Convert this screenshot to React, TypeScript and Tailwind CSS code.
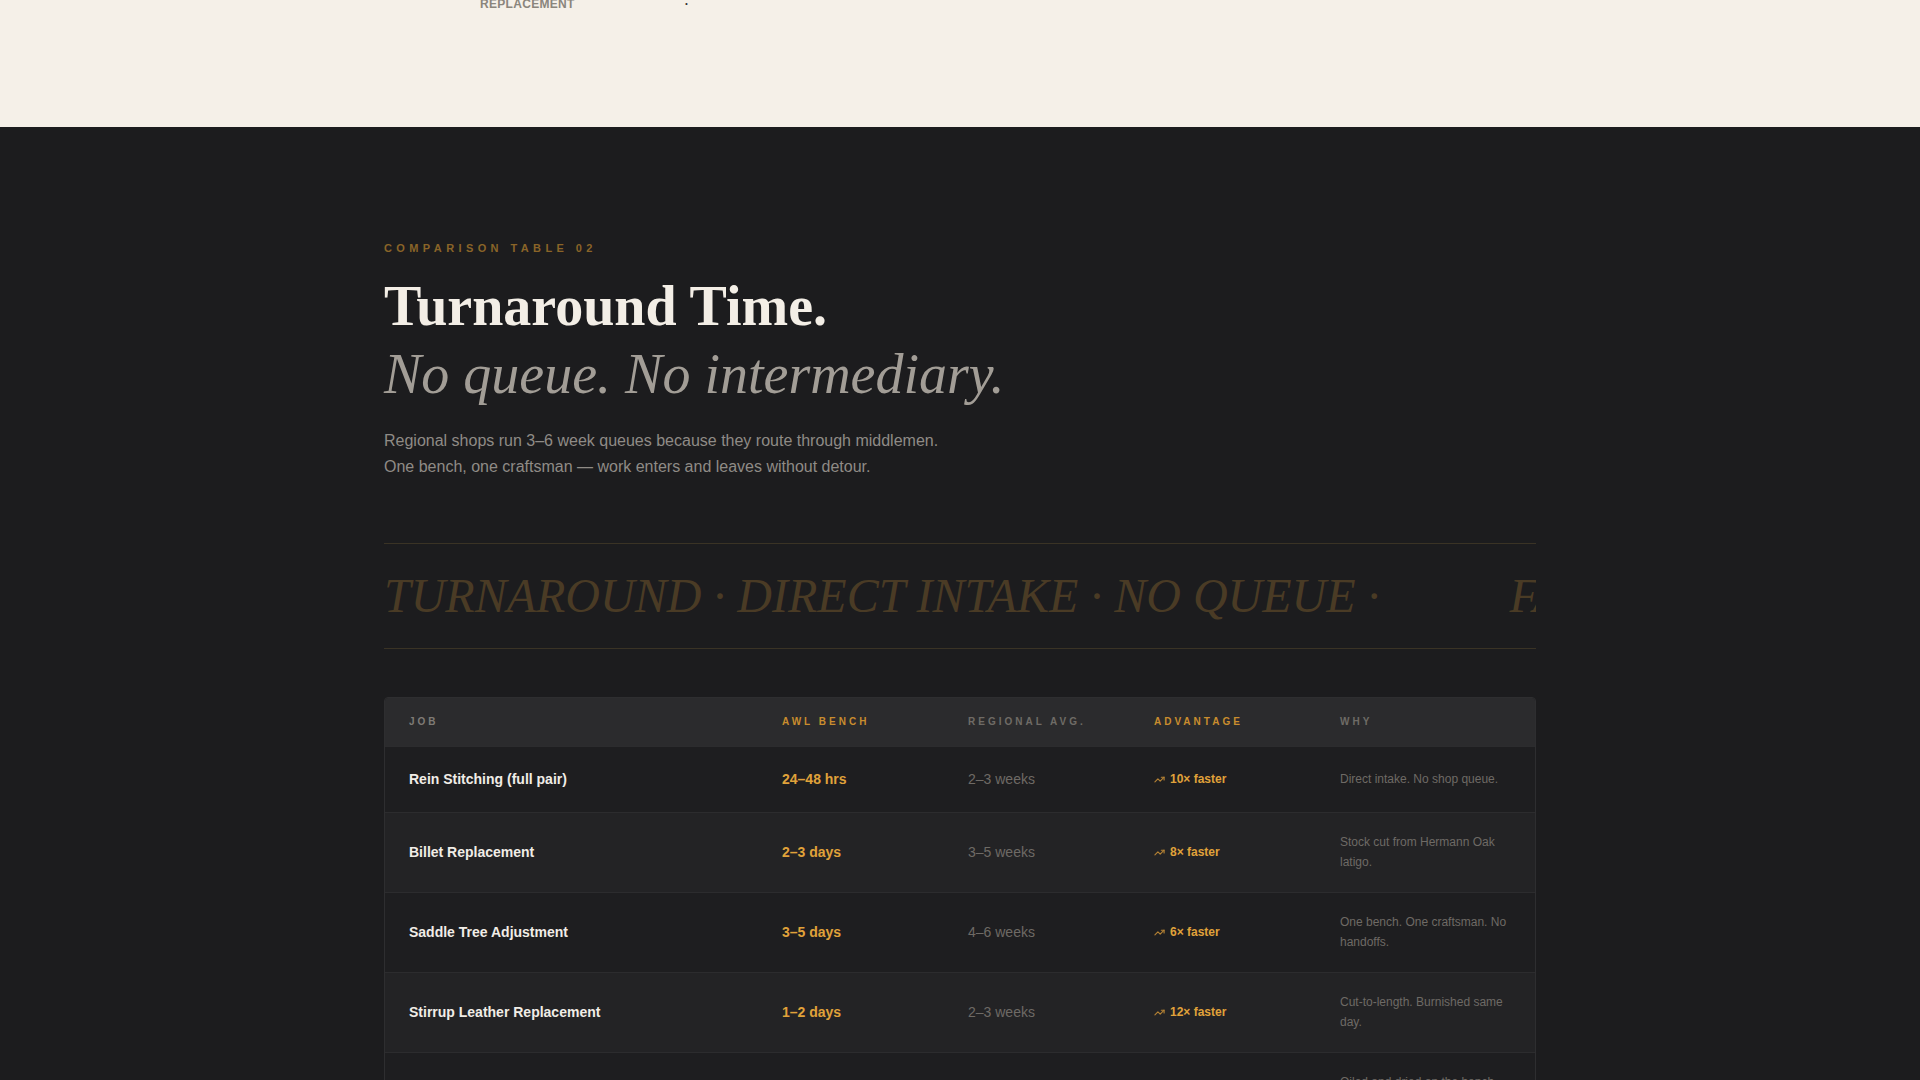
const rows = [
  { job: "Rein Stitching (full pair)", awl: "24–48 hrs", reg: "2–3 weeks", adv: "10× faster", why: "Direct intake. No shop queue." },
  { job: "Billet Replacement", awl: "2–3 days", reg: "3–5 weeks", adv: "8× faster", why: "Stock cut from Hermann Oak latigo." },
  { job: "Saddle Tree Adjustment", awl: "3–5 days", reg: "4–6 weeks", adv: "6× faster", why: "One bench. One craftsman. No handoffs." },
  { job: "Stirrup Leather Replacement", awl: "1–2 days", reg: "2–3 weeks", adv: "12× faster", why: "Cut-to-length. Burnished same day." },
  { job: "Full Saddle Conditioning", awl: "1 day", reg: "1–2 weeks", adv: "7× faster", why: "Oiled and dried on the bench, not in a back room." },
];

function Trend() {
  return (
    <svg width="11" height="11" viewBox="0 0 24 24" fill="none" stroke="currentColor" strokeWidth="2.5" strokeLinecap="round" strokeLinejoin="round">
      <polyline points="22 7 13.5 15.5 8.5 10.5 2 17" />
      <polyline points="16 7 22 7 22 13" />
    </svg>
  );
}

export default function App() {
  const sans = { fontFamily: '"Liberation Sans", Arial, sans-serif' };
  const serif = { fontFamily: '"Liberation Serif", "Times New Roman", serif' };
  return (
    <div className="min-h-screen bg-[#1c1c1e]" style={sans}>
      <div className="h-[127px] bg-[#f5f0e8] overflow-hidden">
        <div className="ml-[480px] -mt-[5px] flex gap-[110px] text-[12px] font-bold tracking-wide text-[#8a857c]">
          <span>REPLACEMENT</span>
          <span className="text-[#333]">·</span>
        </div>
      </div>

      <div className="mx-auto w-[1152px] pt-[113px]">
        <div className="text-[11px] font-bold tracking-[0.4em] text-[#8a6428]">COMPARISON TABLE 02</div>
        <h2 className="mt-[15px] text-[56px] font-bold leading-[68px] text-[#f3eee6]" style={serif}>Turnaround Time.</h2>
        <div className="text-[56px] italic leading-[68px] text-[#a29d96]" style={serif}>No queue. No intermediary.</div>
        <p className="mt-[20px] text-[16px] leading-[26px] text-[#8f8b86]">
          Regional shops run 3–6 week queues because they route through middlemen.
          <br />
          One bench, one craftsman — work enters and leaves without detour.
        </p>

        <div className="mt-[63px] h-[106px] overflow-hidden border-y border-[#3a3325] flex items-center whitespace-nowrap">
          <div className="flex gap-[34px] text-[48px] italic text-[#4a3b25]" style={serif}>
            <span>TURNAROUND · DIRECT INTAKE · NO QUEUE ·</span>
            <span className="ml-[96px]">FAST RETURN · TURNAROUND ·</span>
          </div>
        </div>

        <div className="mt-[48px] rounded-t-[4px] border border-[#2e2e30] overflow-hidden">
          <div className="grid grid-cols-[373px_186px_186px_186px_1fr] h-[48px] items-center bg-[#2b2b2d] text-[10px] font-bold tracking-[0.3em]">
            <div className="pl-[24px] text-[#7f7b76]">JOB</div>
            <div className="pl-[24px] text-[#c98d2e]">AWL BENCH</div>
            <div className="pl-[24px] text-[#6f6b66]">REGIONAL AVG.</div>
            <div className="pl-[24px] text-[#c98d2e]">ADVANTAGE</div>
            <div className="pl-[24px] text-[#6f6b66]">WHY</div>
          </div>
          {rows.map((r, i) => (
            <div
              key={r.job}
              className={`grid grid-cols-[373px_186px_186px_186px_1fr] items-center border-t border-[#2c2c2e] ${i === 0 ? "h-[66px]" : "h-[80px]"} ${i % 2 === 0 ? "bg-[#1e1e20]" : "bg-[#232325]"}`}
            >
              <div className="pl-[24px] text-[14px] font-bold text-[#f1ede7]">{r.job}</div>
              <div className="pl-[24px] text-[14px] font-bold text-[#e0a23a]">{r.awl}</div>
              <div className="pl-[24px] text-[14px] text-[#6e6a65]">{r.reg}</div>
              <div className="pl-[24px] flex items-center gap-[5px] text-[12px] font-bold text-[#e0a23a]">
                <span className="text-[#b58234]"><Trend /></span>
                {r.adv}
              </div>
              <div className="pl-[24px] pr-[24px] text-[12px] leading-[20px] text-[#6e6a65]">{r.why}</div>
            </div>
          ))}
        </div>
      </div>
    </div>
  );
}
